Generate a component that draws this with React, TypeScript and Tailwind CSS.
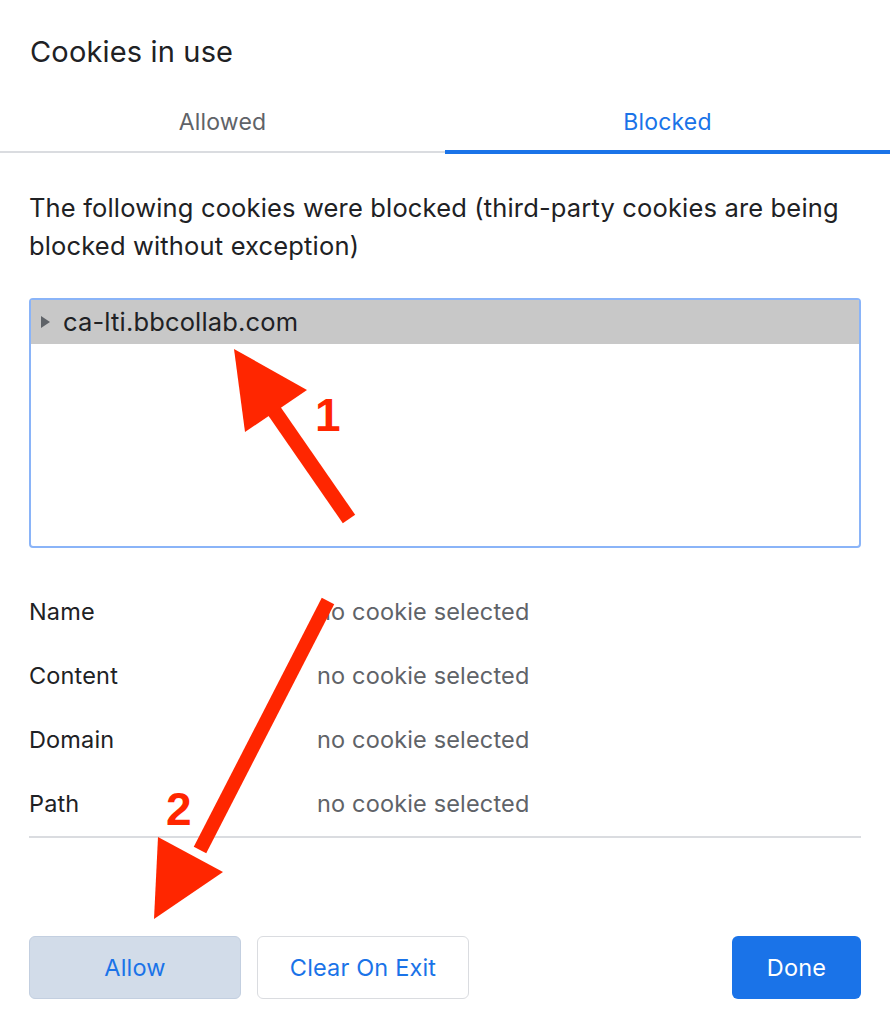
import React from "react";

const rows = ["Name", "Content", "Domain", "Path"];

export default function App() {
  return (
    <div
      className="relative w-[890px] h-[1029px] bg-white overflow-hidden text-[#202124] tracking-[0.01em]"
      style={{ fontFamily: "Inter, 'Liberation Sans', sans-serif" }}
    >
      {/* Title */}
      <div className="px-[30px] pt-[34px] text-[29px] leading-[36px]">Cookies in use</div>

      {/* Tabs */}
      <div className="mt-[20px] grid grid-cols-2">
        <div className="h-[63px] border-b-2 border-[#dadce0] flex items-start justify-center pt-[16px] text-[23px] leading-[32px] text-[#5f6368]">
          Allowed
        </div>
        <div className="h-[64px] border-b-[4px] border-[#1a73e8] flex items-start justify-center pt-[16px] text-[23px] leading-[32px] text-[#1a73e8]">
          Blocked
        </div>
      </div>

      <div className="px-[29px]">
        {/* Description */}
        <p className="mt-[35px] text-[25.5px] leading-[38px]">
          The following cookies were blocked (third-party cookies are being blocked without exception)
        </p>

        {/* Cookie tree */}
        <div className="mt-[33px] h-[250px] border-2 border-[#8ab4f8] rounded-[4px]">
          <div className="h-[44px] bg-[#c8c8c8] flex items-center pl-[10px]">
            <span className="w-0 h-0 border-y-[6px] border-y-transparent border-l-[9px] border-l-[#5f6368]" />
            <span className="ml-[13px] text-[25.5px] text-[#202124]">ca-lti.bbcollab.com</span>
          </div>
        </div>

        {/* Details */}
        <div className="mt-[32px] border-b-2 border-[#dadce0]">
          {rows.map((r) => (
            <div key={r} className="h-[64px] flex items-center text-[23.5px]">
              <span className="w-[288px]">{r}</span>
              <span className="text-[#5f6368]">no cookie selected</span>
            </div>
          ))}
        </div>

        {/* Buttons */}
        <div className="mt-[98px] flex items-center">
          <button className="w-[212px] h-[63px] rounded-[6px] bg-[#d2dce9] border border-[#c3cfe0] text-[23.5px] text-[#1a73e8]">
            Allow
          </button>
          <button className="ml-[16px] w-[212px] h-[63px] rounded-[6px] bg-white border border-[#dadce0] text-[23.5px] text-[#1a73e8]">
            Clear On Exit
          </button>
          <button className="ml-auto w-[129px] h-[63px] rounded-[6px] bg-[#1a73e8] text-[23.5px] text-white">
            Done
          </button>
        </div>
      </div>

      {/* Annotation overlay */}
      <svg className="absolute inset-0 pointer-events-none" width="890" height="1029" viewBox="0 0 890 1029">
        <line x1="349" y1="519" x2="268" y2="402" stroke="#ff2600" strokeWidth="15" />
        <polygon points="234,349 307,390 245,432" fill="#ff2600" />
        <line x1="328" y1="601" x2="200" y2="850" stroke="#ff2600" strokeWidth="14" />
        <polygon points="154,919 158,837 223,872" fill="#ff2600" />
        <text x="315" y="431" fill="#ff2600" fontSize="46" fontWeight="bold" fontFamily="'Liberation Sans', Arial, sans-serif">1</text>
        <text x="166" y="825" fill="#ff2600" fontSize="46" fontWeight="bold" fontFamily="'Liberation Sans', Arial, sans-serif">2</text>
      </svg>
    </div>
  );
}
